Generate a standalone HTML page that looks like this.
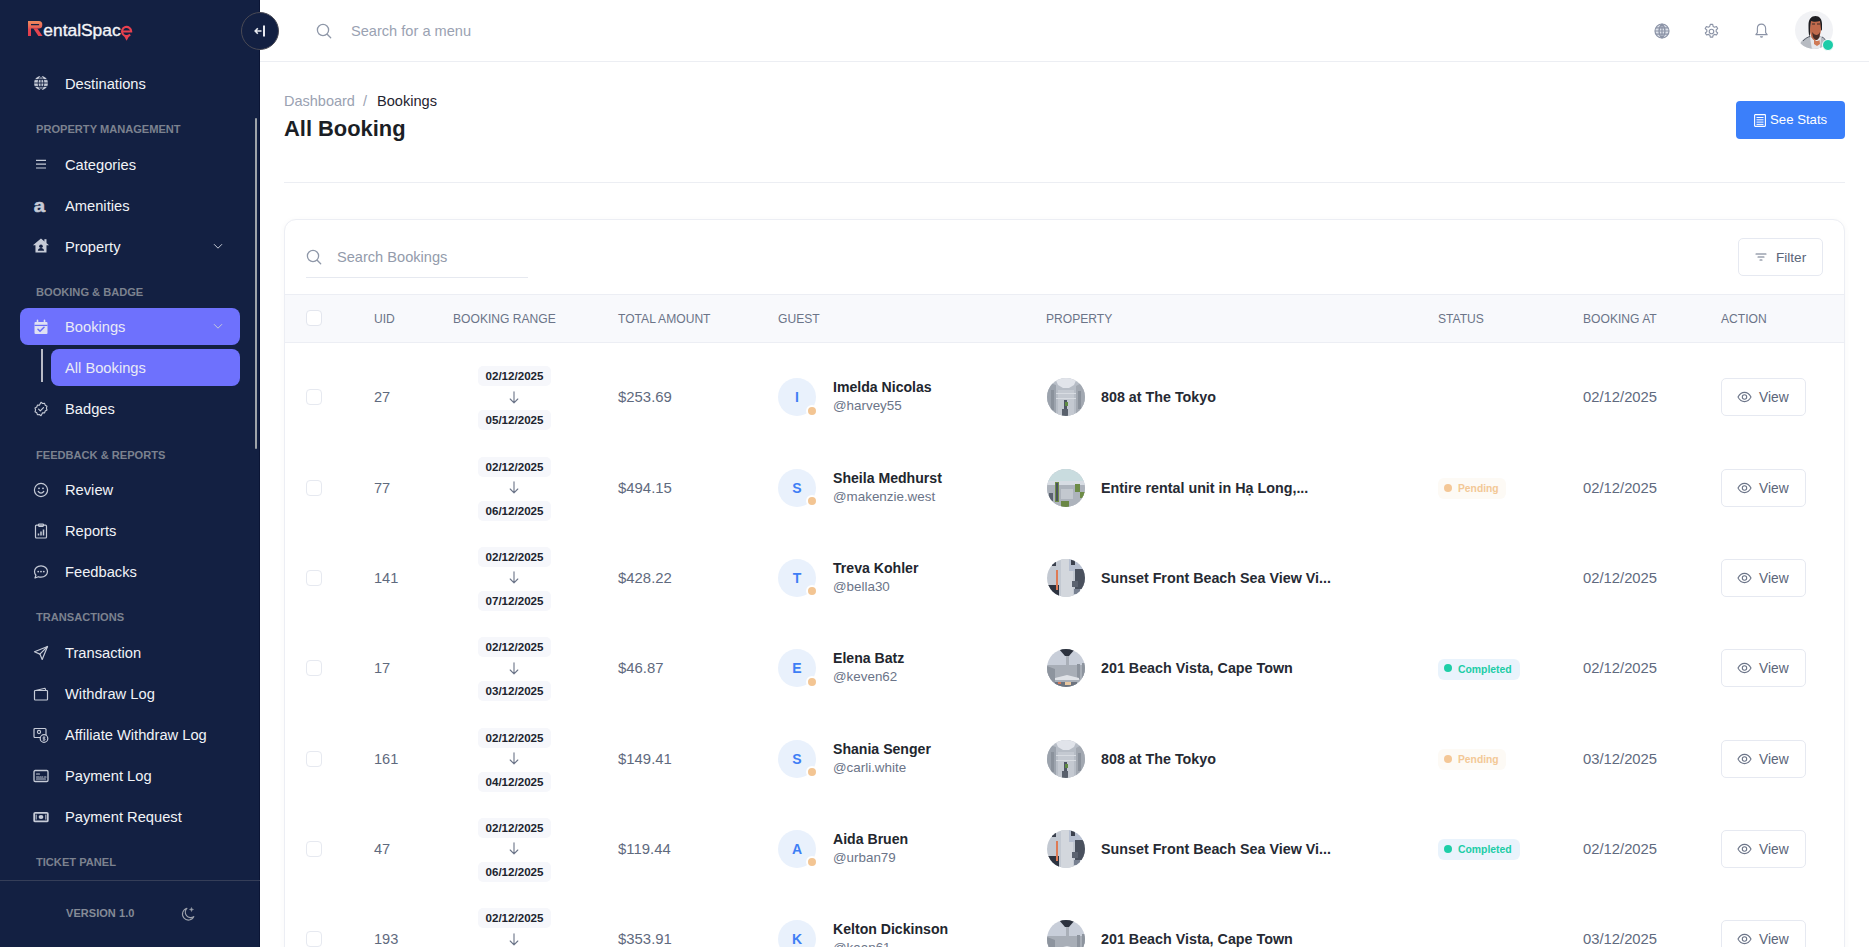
<!DOCTYPE html>
<html><head><meta charset="utf-8"><title>All Booking</title>
<style>
*{box-sizing:border-box;margin:0;padding:0}
html,body{width:1869px;height:947px;overflow:hidden;background:#ffffff;font-family:"Liberation Sans", sans-serif}
.abs{position:absolute}
.ic{position:absolute;overflow:visible}
#sb{position:absolute;left:0;top:0;width:260px;height:947px;background:#132042;border-right:1px solid #0b1535}
.it{position:absolute;left:65px;height:20px;line-height:20px;font-size:14.7px;color:#f1f3f7;white-space:nowrap}
.sec{position:absolute;left:36px;height:14px;line-height:14px;font-size:11.1px;font-weight:700;letter-spacing:0;color:#7c828f;white-space:nowrap}
.t{position:absolute;white-space:nowrap}
</style></head><body>
<div id="sb">

<svg class="abs" style="left:0;top:0" width="140" height="50" viewBox="0 0 140 50">
<defs><linearGradient id="rg" x1="0" y1="21" x2="0" y2="36" gradientUnits="userSpaceOnUse"><stop offset="0" stop-color="#ee8a5e"/><stop offset=".35" stop-color="#ea6a57"/><stop offset=".6" stop-color="#e5444f"/><stop offset="1" stop-color="#e23b4d"/></linearGradient></defs>
<path d="M28 21H38.8A3.5 3.5 0 0 1 42.3 24.5V25A3.5 3.5 0 0 1 38.8 28.5H31V36H28z M31 24V25.3H38.6A.65 .65 0 0 0 38.6 24z" fill="url(#rg)" fill-rule="evenodd"/>
<path d="M33.2 28.3H37.2L42.6 36H38.4z" fill="#e5444f"/>
<text x="43.3" y="36" font-family="Liberation Sans" font-size="17.4" fill="#f4f5f8" stroke="#f4f5f8" stroke-width=".35">entalSpac</text>
<path d="M122 31.5H131.2A4.6 4.6 0 1 0 130.1 34.46" fill="none" stroke="#e8404f" stroke-width="2.1"/>
<path d="M123.6 35.2L126.6 40.8L129.6 35.2z" fill="#e8404f"/>
</svg>
<div class="abs" style="left:20px;top:308px;width:220px;height:37px;border-radius:8px;background:#6e71fd"></div>
<div class="abs" style="left:51px;top:349px;width:189px;height:37px;border-radius:8px;background:#6e71fd"></div>
<div class="abs" style="left:41px;top:349px;width:2px;height:33px;background:#b9bcc6"></div>
<div class="it" style="top:74px;color:#f1f3f7">Destinations</div>
<svg class="ic" style="left:33px;top:76px" width="16" height="16" viewBox="0 0 16 16" fill="none" stroke="#c6cbd7" stroke-width="1.3" stroke-linecap="round" stroke-linejoin="round"><circle cx="8" cy="7" r="7" fill="#c6cbd7" stroke="none"/><path d="M1 7h14M8 0v14M1.8 3.6h12.4M1.8 10.4h12.4M8 0c-2.2 2-2.8 4.2-2.8 7s.6 5 2.8 7M8 0c2.2 2 2.8 4.2 2.8 7s-.6 5-2.8 7" stroke="#132042" stroke-width="0.9"/></svg>
<div class="it" style="top:155px;color:#f1f3f7">Categories</div>
<svg class="ic" style="left:33px;top:157px" width="16" height="16" viewBox="0 0 16 16" fill="none" stroke="#c6cbd7" stroke-width="1.3" stroke-linecap="round" stroke-linejoin="round"><path d="M3 3.4h10M3 7.2h10M3 11h10" stroke-width="1.2" stroke-linecap="butt"/></svg>
<div class="it" style="top:196px;color:#f1f3f7">Amenities</div>
<svg class="ic" style="left:33px;top:198px" width="16" height="16" viewBox="0 0 16 16" fill="none" stroke="#c6cbd7" stroke-width="1.3" stroke-linecap="round" stroke-linejoin="round"><text x="0.6" y="14" font-family="Liberation Sans" font-weight="700" font-size="19" fill="#c6cbd7" stroke="#c6cbd7" stroke-width=".5" transform="scale(1.08 1)">a</text></svg>
<div class="it" style="top:237px;color:#f1f3f7">Property</div>
<svg class="ic" style="left:33px;top:239px" width="16" height="16" viewBox="0 0 16 16" fill="none" stroke="#c6cbd7" stroke-width="1.3" stroke-linecap="round" stroke-linejoin="round"><g transform="translate(-0.5 -1.2) scale(1.06 1)"><path d="M8 .8L.4 7.4h2.4V14.6h10.4V7.4h2.4z" fill="#c6cbd7" stroke="none"/><rect x="11.2" y="1.4" width="2" height="3.8" fill="#c6cbd7" stroke="none"/><circle cx="8" cy="8.4" r="1.7" fill="#132042" stroke="none"/><path d="M5 13c.3-1.9 1.4-2.7 3-2.7s2.7.8 3 2.7z" fill="#132042" stroke="none"/></g></svg>
<div class="it" style="top:317px;color:#e9eaf6">Bookings</div>
<svg class="ic" style="left:33px;top:319px" width="16" height="16" viewBox="0 0 16 16" fill="none" stroke="#c6cbd7" stroke-width="1.3" stroke-linecap="round" stroke-linejoin="round"><rect x="1.5" y="3" width="13" height="12" rx="1" fill="#dfe1f3" stroke="none"/><path d="M4.5 1.2v3.4M11.5 1.2v3.4" stroke="#dfe1f3" stroke-width="1.6"/><rect x="1.5" y="5.8" width="13" height="1.2" fill="#6b6ef7" stroke="none"/><path d="M5 10.3l2 2 4-4" stroke="#6b6ef7" stroke-width="1.6"/></svg>
<div class="it" style="top:358px;color:#e9eaf6">All Bookings</div>
<div class="it" style="top:399px;color:#f1f3f7">Badges</div>
<svg class="ic" style="left:33px;top:401px" width="16" height="16" viewBox="0 0 16 16" fill="none" stroke="#c6cbd7" stroke-width="1.3" stroke-linecap="round" stroke-linejoin="round"><path d="M8 1.2l1.6 1.3 2-.2.6 1.9 1.8 1-.6 1.9.6 1.9-1.8 1-.6 1.9-2-.2L8 14.8l-1.6-1.3-2 .2-.6-1.9-1.8-1 .6-1.9-.6-1.9 1.8-1 .6-1.9 2 .2z" stroke-width="1.1"/><path d="M5.6 8.1l1.7 1.7 3.2-3.2" stroke-width="1.2"/></svg>
<div class="it" style="top:480px;color:#f1f3f7">Review</div>
<svg class="ic" style="left:33px;top:482px" width="16" height="16" viewBox="0 0 16 16" fill="none" stroke="#c6cbd7" stroke-width="1.3" stroke-linecap="round" stroke-linejoin="round"><circle cx="8" cy="8" r="6.6" stroke-width="1.2"/><path d="M5.2 9.4c.7 1.1 1.6 1.7 2.8 1.7s2.1-.6 2.8-1.7" stroke-width="1.2"/><circle cx="6" cy="6.3" r=".9" fill="#c6cbd7" stroke="none"/><circle cx="10" cy="6.3" r=".9" fill="#c6cbd7" stroke="none"/></svg>
<div class="it" style="top:521px;color:#f1f3f7">Reports</div>
<svg class="ic" style="left:33px;top:523px" width="16" height="16" viewBox="0 0 16 16" fill="none" stroke="#c6cbd7" stroke-width="1.3" stroke-linecap="round" stroke-linejoin="round"><rect x="2.5" y="2.2" width="11" height="12.8" rx="1" stroke-width="1.2"/><rect x="5.5" y="1" width="5" height="2.4" rx=".6" stroke-width="1.1"/><path d="M5.5 12.5v-2M8 12.5v-4M10.5 12.5v-6" stroke-width="1.5" stroke-linecap="butt"/></svg>
<div class="it" style="top:562px;color:#f1f3f7">Feedbacks</div>
<svg class="ic" style="left:33px;top:564px" width="16" height="16" viewBox="0 0 16 16" fill="none" stroke="#c6cbd7" stroke-width="1.3" stroke-linecap="round" stroke-linejoin="round"><path d="M8 1.8c3.7 0 6.5 2.5 6.5 5.7s-2.8 5.7-6.5 5.7c-.9 0-1.8-.2-2.6-.5L2 14l.9-2.8C2 10.2 1.5 8.9 1.5 7.5 1.5 4.3 4.3 1.8 8 1.8z" stroke-width="1.2"/><circle cx="5.2" cy="7.6" r=".9" fill="#c6cbd7" stroke="none"/><circle cx="8" cy="7.6" r=".9" fill="#c6cbd7" stroke="none"/><circle cx="10.8" cy="7.6" r=".9" fill="#c6cbd7" stroke="none"/></svg>
<div class="it" style="top:643px;color:#f1f3f7">Transaction</div>
<svg class="ic" style="left:33px;top:645px" width="16" height="16" viewBox="0 0 16 16" fill="none" stroke="#c6cbd7" stroke-width="1.3" stroke-linecap="round" stroke-linejoin="round"><path d="M14.5 1.5L1.5 6.8l5.4 2.3 2.3 5.4z" stroke-width="1.2"/><path d="M14.5 1.5L6.9 9.1" stroke-width="1.2"/></svg>
<div class="it" style="top:684px;color:#f1f3f7">Withdraw Log</div>
<svg class="ic" style="left:33px;top:686px" width="16" height="16" viewBox="0 0 16 16" fill="none" stroke="#c6cbd7" stroke-width="1.3" stroke-linecap="round" stroke-linejoin="round"><rect x="1.5" y="4.5" width="13" height="9.5" rx=".8" stroke-width="1.2"/><path d="M2.5 4.5l9.5-2.3.8 2.3" stroke-width="1.1"/></svg>
<div class="it" style="top:725px;color:#f1f3f7">Affiliate Withdraw Log</div>
<svg class="ic" style="left:33px;top:727px" width="16" height="16" viewBox="0 0 16 16" fill="none" stroke="#c6cbd7" stroke-width="1.3" stroke-linecap="round" stroke-linejoin="round"><rect x="1" y="1.5" width="12" height="9" rx="1" stroke-width="1.2"/><circle cx="6" cy="5" r="1.6" stroke-width="1.1"/><circle cx="11" cy="11.5" r="3.8" fill="#131f42" stroke-width="1.2"/><path d="M11 9.5v4M12 10.3h-1.5a.7.7 0 000 1.4h1a.7.7 0 010 1.4H10" stroke-width=".8"/></svg>
<div class="it" style="top:766px;color:#f1f3f7">Payment Log</div>
<svg class="ic" style="left:33px;top:768px" width="16" height="16" viewBox="0 0 16 16" fill="none" stroke="#c6cbd7" stroke-width="1.3" stroke-linecap="round" stroke-linejoin="round"><rect x="1" y="2.5" width="14" height="11" rx="1.2" stroke-width="1.3"/><path d="M3.5 6h3M3.5 9h2.5M7 9h1M9 9h1M11.5 9h1.5M3.5 11h9" stroke-width="1.1"/></svg>
<div class="it" style="top:807px;color:#f1f3f7">Payment Request</div>
<svg class="ic" style="left:33px;top:809px" width="16" height="16" viewBox="0 0 16 16" fill="none" stroke="#c6cbd7" stroke-width="1.3" stroke-linecap="round" stroke-linejoin="round"><rect x="1.2" y="3.8" width="13.6" height="8.6" rx="1" stroke-width="1.8"/><ellipse cx="8" cy="8.1" rx="2.4" ry="2" fill="#c6cbd7" stroke="none"/><path d="M3.2 6v4.2M12.8 6v4.2" stroke-width="1"/></svg>
<div class="sec" style="top:122px">PROPERTY MANAGEMENT</div>
<div class="sec" style="top:285px">BOOKING &amp; BADGE</div>
<div class="sec" style="top:448px">FEEDBACK &amp; REPORTS</div>
<div class="sec" style="top:610px">TRANSACTIONS</div>
<div class="sec" style="top:855px">TICKET PANEL</div>
<svg class="ic" style="left:213px;top:243px" width="10" height="7" viewBox="0 0 10 7" fill="none" stroke="#c6cbd7" stroke-width="1"><path d="M1 1.2l4 4 4-4"/></svg>
<svg class="ic" style="left:213px;top:323px" width="10" height="7" viewBox="0 0 10 7" fill="none" stroke="#c6cbd7" stroke-width="1"><path d="M1 1.2l4 4 4-4"/></svg>
<div class="abs" style="left:255px;top:118px;width:2px;height:331px;background:#9ea3a9;border-radius:1px"></div>
<div class="abs" style="left:0;top:880px;width:260px;height:1px;background:#353e58"></div>
<div class="t" style="left:66px;top:906px;height:14px;line-height:14px;font-size:11px;font-weight:700;letter-spacing:.05px;color:#858b97">VERSION 1.0</div>
<svg class="ic" style="left:180px;top:906px" width="16" height="16" viewBox="0 0 16 16" fill="none" stroke="#9ba0ab" stroke-width="1.1"><path d="M7.2 2.2A6 6 0 1 0 14 10.4 5 5 0 0 1 7.2 2.2z"/><path d="M11.5 1.5l.5 1.5 1.5.5-1.5.5-.5 1.5-.5-1.5-1.5-.5 1.5-.5z" fill="#9ba0ab" stroke-width=".5"/></svg>
</div>
<div class="abs" style="left:241px;top:12px;width:38px;height:38px;border-radius:50%;background:#132042;border:1px solid #4a4a55"></div>
<svg class="ic" style="left:253px;top:24px" width="14" height="14" viewBox="0 0 14 14" fill="none" stroke="#e8eaf0" stroke-width="1.6"><path d="M8.5 7H2.2M4.8 4.3L2.2 7l2.6 2.7"/><path d="M11 1.5v11" stroke-width="2"/></svg>
<div class="abs" style="left:260px;top:61px;width:1609px;height:1px;background:#eceef3"></div>
<svg class="ic" style="left:316px;top:23px" width="16" height="16" viewBox="0 0 16 16" fill="none" stroke="#8e97a8" stroke-width="1.3" stroke-linecap="round"><circle cx="7" cy="7" r="5.6"/><path d="M11.2 11.2l3.5 3.5"/></svg>
<div class="t" style="left:351px;top:21px;height:20px;line-height:20px;font-size:14.6px;color:#9aa2b2">Search for a menu</div>
<svg class="ic" style="left:1654px;top:23px" width="16" height="16" viewBox="0 0 16 16" fill="none" stroke="#8b93a6" stroke-width="1.2"><circle cx="8" cy="8" r="7" fill="#dde1ea"/><path d="M1 8h14M8 1v14M2 4.8h12M2 11.2h12M8 1c-2.2 2-3 4.3-3 7s.8 5 3 7M8 1c2.2 2 3 4.3 3 7s-.8 5-3 7"/></svg>
<svg class="ic" style="left:1703px;top:23px" width="17" height="17" viewBox="0 0 24 24" fill="none" stroke="#8b93a6" stroke-width="1.6" stroke-linejoin="round"><path d="M10.3 2h3.4l.6 2.8 2 1.1 2.7-.9 1.7 2.9-2.1 1.9v2.4l2.1 1.9-1.7 2.9-2.7-.9-2 1.1-.6 2.8h-3.4l-.6-2.8-2-1.1-2.7.9-1.7-2.9 2.1-1.9v-2.4L3.1 7.9l1.7-2.9 2.7.9 2-1.1z"/><circle cx="12" cy="12" r="3.2"/></svg>
<svg class="ic" style="left:1754px;top:23px" width="15" height="15" viewBox="0 0 16 16" fill="none" stroke="#8b93a6" stroke-width="1.2" stroke-linejoin="round"><path d="M8 1.2c-2.6 0-4.4 2-4.4 4.6v4.4L2 12.4h12l-1.6-2.2V5.8C12.4 3.2 10.6 1.2 8 1.2z"/><path d="M6.8 14.2c.3.5.7.7 1.2.7s.9-.2 1.2-.7" stroke-width="1.4"/></svg>
<div class="abs" style="left:1795px;top:10.5px;width:38px;height:38px;border-radius:50%;background:#f1f2f5;overflow:hidden">
<svg width="38" height="38" viewBox="0 0 38 38"><path d="M3 40L6 31c2-3 5-5 9-6l5 2 5-2c4 1 7 4 8 8l1 7z" fill="#b7bbc2"/><path d="M8 30c3-3 5-4 7-4.5M27 26c2 1 4 3 5 6" stroke="#5b606b" stroke-width="1" fill="none"/><path d="M15 26l5 2 6-2-1 13H17z" fill="#e6e8ec"/><path d="M13.5 14c0-6 3-9 7-9s6.5 3 6.5 8v7l-2-3-1-6c-3 1-6 1-8 0l-.5 9-1 6c-1-3-1-8-1-12z" fill="#1e1e22"/><path d="M16 10c2 1 6 1 9 0l1 8c0 5-2 9-4 10.5-1.5 1-3 1-4 0-2-2-3-6-3-10z" fill="#c06a4c"/><path d="M17 13h3M22 13h3" stroke="#3a2a28" stroke-width="1.2"/><path d="M17 21c1.5 2 3 3 4.5 3s2.5-1 3.5-3l-.5 5c-1 2-2 3-3 3s-2.5-1-3.5-3z" fill="#4a2e28"/><path d="M19 28c1.5 2 3.5 3 5.5 1l.5 4-3 2-3-2z" fill="#cf7a56"/></svg></div>
<div class="abs" style="left:1821.5px;top:38.5px;width:12px;height:12px;border-radius:50%;background:#1ccca8;border:1.3px solid #fff"></div>
<div class="t" style="left:284px;top:91px;height:20px;line-height:20px;font-size:14.5px;color:#9aa2b2">Dashboard</div>
<div class="t" style="left:363px;top:91px;height:20px;line-height:20px;font-size:14.5px;color:#9aa2b2">/</div>
<div class="t" style="left:377px;top:91px;height:20px;line-height:20px;font-size:14.6px;color:#1f2430">Bookings</div>
<div class="t" style="left:284px;top:114px;height:30px;line-height:30px;font-size:21.9px;font-weight:700;color:#1b1e25">All Booking</div>
<div class="abs" style="left:1736px;top:101px;width:109px;height:38px;border-radius:4px;background:#3b7ffa"></div>
<svg class="ic" style="left:1754px;top:114px" width="12" height="13" viewBox="0 0 12 13" fill="none" stroke="#fff" stroke-width="1.1"><rect x=".6" y=".6" width="10.8" height="11.8" rx=".6"/><path d="M2.5 3.5h7M2.5 5.8h7M2.5 8.1h7M2.5 10.4h7" stroke-width="1"/></svg>
<div class="t" style="left:1770px;top:110px;height:20px;line-height:20px;font-size:13.2px;color:#ffffff">See Stats</div>
<div class="abs" style="left:284px;top:182px;width:1561px;height:1px;background:#eceef3"></div>
<div class="abs" style="left:284px;top:219px;width:1561px;height:760px;border:1px solid #eceef4;border-radius:12px;background:#fff;box-shadow:0 1px 6px rgba(30,40,70,.035)"></div>
<svg class="ic" style="left:306px;top:249px" width="16" height="16" viewBox="0 0 16 16" fill="none" stroke="#8e97a8" stroke-width="1.3" stroke-linecap="round"><circle cx="7" cy="7" r="5.6"/><path d="M11.2 11.2l3.5 3.5"/></svg>
<div class="t" style="left:337px;top:247px;height:20px;line-height:20px;font-size:14.6px;color:#939bab">Search Bookings</div>
<div class="abs" style="left:306px;top:277px;width:222px;height:1px;background:#e6e9f0"></div>
<div class="abs" style="left:1738px;top:238px;width:85px;height:38px;border:1px solid #e6e9f1;border-radius:5px;background:#fff"></div>
<svg class="ic" style="left:1755px;top:253px" width="12" height="8" viewBox="0 0 12 8" fill="none" stroke="#6b7488" stroke-width="1.1" stroke-linecap="round"><path d="M1 1h10M3 4h6M5 7h2"/></svg>
<div class="t" style="left:1776px;top:247.5px;height:20px;line-height:20px;font-size:13.6px;color:#5b6579">Filter</div>
<div class="abs" style="left:285px;top:294px;width:1559px;height:49px;background:#f8f9fc;border-top:1px solid #eceef4;border-bottom:1px solid #eceef4"></div>
<div class="abs" style="left:306px;top:310px;width:16px;height:16px;border:1px solid #e3e6ee;border-radius:4px;background:#fff"></div>
<div class="t" style="left:374px;top:310px;height:18px;line-height:18px;font-size:12.1px;color:#6b7488">UID</div>
<div class="t" style="left:453px;top:310px;height:18px;line-height:18px;font-size:12.1px;color:#6b7488">BOOKING RANGE</div>
<div class="t" style="left:618px;top:310px;height:18px;line-height:18px;font-size:12.1px;color:#6b7488">TOTAL AMOUNT</div>
<div class="t" style="left:778px;top:310px;height:18px;line-height:18px;font-size:12.1px;color:#6b7488">GUEST</div>
<div class="t" style="left:1046px;top:310px;height:18px;line-height:18px;font-size:12.1px;color:#6b7488">PROPERTY</div>
<div class="t" style="left:1438px;top:310px;height:18px;line-height:18px;font-size:12.1px;color:#6b7488">STATUS</div>
<div class="t" style="left:1583px;top:310px;height:18px;line-height:18px;font-size:12.1px;color:#6b7488">BOOKING AT</div>
<div class="t" style="left:1721px;top:310px;height:18px;line-height:18px;font-size:12.1px;color:#6b7488">ACTION</div>
<div class="abs" style="left:306px;top:389.2px;width:16px;height:16px;border:1px solid #e6e9f0;border-radius:4px;background:#fff"></div>
<div class="t" style="left:374px;top:387.2px;height:20px;line-height:20px;font-size:14.6px;color:#5f6a7e">27</div>
<div class="abs" style="left:478px;top:366.2px;width:73px;height:20px;border-radius:5px;background:#f6f7fb;font-size:11.6px;font-weight:700;color:#20242e;text-align:center;line-height:20px">02/12/2025</div>
<svg class="ic" style="left:509px;top:390.7px" width="10" height="13" viewBox="0 0 10 13" fill="none" stroke="#6b7488" stroke-width="1.1" stroke-linecap="round" stroke-linejoin="round"><path d="M5 .8v11M1.2 8l3.8 3.8L8.8 8"/></svg>
<div class="abs" style="left:478px;top:410.2px;width:73px;height:20px;border-radius:5px;background:#f6f7fb;font-size:11.6px;font-weight:700;color:#20242e;text-align:center;line-height:20px">05/12/2025</div>
<div class="t" style="left:618px;top:387.2px;height:20px;line-height:20px;font-size:14.9px;color:#5f6a7e">$253.69</div>
<div class="abs" style="left:778px;top:378.2px;width:38px;height:38px;border-radius:50%;background:#e9f1fc;color:#3e7ef5;font-size:14px;font-weight:700;text-align:center;line-height:38px">I</div>
<div class="abs" style="left:805.5px;top:404.7px;width:12px;height:12px;border-radius:50%;background:#f3c593;border:2px solid #fff"></div>
<div class="t" style="left:833px;top:377.2px;height:20px;line-height:20px;font-size:14.1px;font-weight:700;color:#22262e">Imelda Nicolas</div>
<div class="t" style="left:833px;top:397.2px;height:18px;line-height:18px;font-size:13.4px;color:#6b7488">@harvey55</div>
<div class="abs" style="left:1047px;top:378.2px;width:38px;height:38px;border-radius:50%;overflow:hidden"><svg width="38" height="38" viewBox="0 0 38 38"><rect width="38" height="38" fill="#b7bdc6"/><path d="M8 0h22l-3 7-5 3h-6l-5-3z" fill="#e1e4ea"/><path d="M0 4l9 3v31H0z" fill="#9ca3ad"/><path d="M38 3l-9 5v30h9z" fill="#a2a8b1"/><path d="M11 12h16v26H11z" fill="#c4c9d1"/><path d="M4 12h3v20H4zM31 13h3v18h-3z" fill="#8a919b"/><path d="M17 22h3v10h-3z" fill="#4e5563"/><path d="M18 24h3v4h-3z" fill="#5f8a43"/><path d="M15 31h6v7h-6z" fill="#59606c"/><path d="M9 15h20v1H9zM9 20h20v1H9z" fill="#d8dce2"/></svg></div>
<div class="t" style="left:1101px;top:387.2px;height:20px;line-height:20px;font-size:14.3px;font-weight:700;color:#262a33">808 at The Tokyo</div>
<div class="t" style="left:1583px;top:387.2px;height:20px;line-height:20px;font-size:14.8px;color:#5f6a7e">02/12/2025</div>
<div class="abs" style="left:1721px;top:378.2px;width:85px;height:38px;border:1px solid #e6e9f1;border-radius:5px;background:#fff"></div>
<svg class="ic" style="left:1737px;top:391.2px" width="15" height="12" viewBox="0 0 15 12" fill="none" stroke="#6b7488" stroke-width="1.1"><path d="M1 6c1.6-3 3.8-4.6 6.5-4.6S12.4 3 14 6c-1.6 3-3.8 4.6-6.5 4.6S2.6 9 1 6z"/><circle cx="7.5" cy="6" r="2.2"/></svg>
<div class="t" style="left:1759px;top:388.2px;height:20px;line-height:20px;font-size:13.8px;color:#5b6579">View</div>
<div class="abs" style="left:306px;top:479.55px;width:16px;height:16px;border:1px solid #e6e9f0;border-radius:4px;background:#fff"></div>
<div class="t" style="left:374px;top:477.55px;height:20px;line-height:20px;font-size:14.6px;color:#5f6a7e">77</div>
<div class="abs" style="left:478px;top:456.55px;width:73px;height:20px;border-radius:5px;background:#f6f7fb;font-size:11.6px;font-weight:700;color:#20242e;text-align:center;line-height:20px">02/12/2025</div>
<svg class="ic" style="left:509px;top:481.05px" width="10" height="13" viewBox="0 0 10 13" fill="none" stroke="#6b7488" stroke-width="1.1" stroke-linecap="round" stroke-linejoin="round"><path d="M5 .8v11M1.2 8l3.8 3.8L8.8 8"/></svg>
<div class="abs" style="left:478px;top:500.55px;width:73px;height:20px;border-radius:5px;background:#f6f7fb;font-size:11.6px;font-weight:700;color:#20242e;text-align:center;line-height:20px">06/12/2025</div>
<div class="t" style="left:618px;top:477.55px;height:20px;line-height:20px;font-size:14.9px;color:#5f6a7e">$494.15</div>
<div class="abs" style="left:778px;top:468.55px;width:38px;height:38px;border-radius:50%;background:#e9f1fc;color:#3e7ef5;font-size:14px;font-weight:700;text-align:center;line-height:38px">S</div>
<div class="abs" style="left:805.5px;top:495.05px;width:12px;height:12px;border-radius:50%;background:#f3c593;border:2px solid #fff"></div>
<div class="t" style="left:833px;top:467.55px;height:20px;line-height:20px;font-size:14.1px;font-weight:700;color:#22262e">Sheila Medhurst</div>
<div class="t" style="left:833px;top:487.55px;height:18px;line-height:18px;font-size:13.4px;color:#6b7488">@makenzie.west</div>
<div class="abs" style="left:1047px;top:468.55px;width:38px;height:38px;border-radius:50%;overflow:hidden"><svg width="38" height="38" viewBox="0 0 38 38"><rect width="38" height="38" fill="#b9bfc8"/><path d="M0 0h38v12H0z" fill="#c9dcdf"/><path d="M0 12h38v4H0z" fill="#d7dce3"/><path d="M0 16h38v22H0z" fill="#adb3bc"/><path d="M8 13h4v20H8z" fill="#6f8c47"/><path d="M9 14h2v18H9z" fill="#4b5360"/><path d="M28 15h5v8h-5zM33 23h5v6h-5z" fill="#6d8b46"/><path d="M14 32h8v6h-8z" fill="#6a8745"/><path d="M2 24h4v8H2z" fill="#5b6370"/><path d="M14 20h12v10H14z" fill="#c3c8cf"/></svg></div>
<div class="t" style="left:1101px;top:477.55px;height:20px;line-height:20px;font-size:14.3px;font-weight:700;color:#262a33">Entire rental unit in Hạ Long,...</div>
<div class="abs" style="left:1438px;top:478.05px;width:68px;height:21px;border-radius:6px;background:#fdfaf5"></div>
<div class="abs" style="left:1444px;top:483.55px;width:8px;height:8px;border-radius:50%;background:#f4c796"></div>
<div class="t" style="left:1458px;top:481.05px;height:16px;line-height:16px;font-size:10.3px;font-weight:700;color:#f3c896">Pending</div>
<div class="t" style="left:1583px;top:477.55px;height:20px;line-height:20px;font-size:14.8px;color:#5f6a7e">02/12/2025</div>
<div class="abs" style="left:1721px;top:468.55px;width:85px;height:38px;border:1px solid #e6e9f1;border-radius:5px;background:#fff"></div>
<svg class="ic" style="left:1737px;top:481.55px" width="15" height="12" viewBox="0 0 15 12" fill="none" stroke="#6b7488" stroke-width="1.1"><path d="M1 6c1.6-3 3.8-4.6 6.5-4.6S12.4 3 14 6c-1.6 3-3.8 4.6-6.5 4.6S2.6 9 1 6z"/><circle cx="7.5" cy="6" r="2.2"/></svg>
<div class="t" style="left:1759px;top:478.55px;height:20px;line-height:20px;font-size:13.8px;color:#5b6579">View</div>
<div class="abs" style="left:306px;top:569.9px;width:16px;height:16px;border:1px solid #e6e9f0;border-radius:4px;background:#fff"></div>
<div class="t" style="left:374px;top:567.9px;height:20px;line-height:20px;font-size:14.6px;color:#5f6a7e">141</div>
<div class="abs" style="left:478px;top:546.9px;width:73px;height:20px;border-radius:5px;background:#f6f7fb;font-size:11.6px;font-weight:700;color:#20242e;text-align:center;line-height:20px">02/12/2025</div>
<svg class="ic" style="left:509px;top:571.4px" width="10" height="13" viewBox="0 0 10 13" fill="none" stroke="#6b7488" stroke-width="1.1" stroke-linecap="round" stroke-linejoin="round"><path d="M5 .8v11M1.2 8l3.8 3.8L8.8 8"/></svg>
<div class="abs" style="left:478px;top:590.9px;width:73px;height:20px;border-radius:5px;background:#f6f7fb;font-size:11.6px;font-weight:700;color:#20242e;text-align:center;line-height:20px">07/12/2025</div>
<div class="t" style="left:618px;top:567.9px;height:20px;line-height:20px;font-size:14.9px;color:#5f6a7e">$428.22</div>
<div class="abs" style="left:778px;top:558.9px;width:38px;height:38px;border-radius:50%;background:#e9f1fc;color:#3e7ef5;font-size:14px;font-weight:700;text-align:center;line-height:38px">T</div>
<div class="abs" style="left:805.5px;top:585.4px;width:12px;height:12px;border-radius:50%;background:#f3c593;border:2px solid #fff"></div>
<div class="t" style="left:833px;top:557.9px;height:20px;line-height:20px;font-size:14.1px;font-weight:700;color:#22262e">Treva Kohler</div>
<div class="t" style="left:833px;top:577.9px;height:18px;line-height:18px;font-size:13.4px;color:#6b7488">@bella30</div>
<div class="abs" style="left:1047px;top:558.9px;width:38px;height:38px;border-radius:50%;overflow:hidden"><svg width="38" height="38" viewBox="0 0 38 38"><rect width="38" height="38" fill="#c3c9d2"/><path d="M14 0h12v38H14z" fill="#d3d7dd"/><path d="M22 0h16v12H22z" fill="#b6bfd0"/><path d="M28 10h10v20H28z" fill="#4a515e"/><path d="M25 22h6v6h-6z" fill="#5c6370"/><path d="M0 26h12v12H0z" fill="#2d3340"/><path d="M9 11h2v20H9z" fill="#de7a55"/><path d="M5 3h4v4H5zM24 0h4v6h-4z" fill="#3b414e"/><path d="M27 30h6v5h-6z" fill="#778090"/></svg></div>
<div class="t" style="left:1101px;top:567.9px;height:20px;line-height:20px;font-size:14.3px;font-weight:700;color:#262a33">Sunset Front Beach Sea View Vi...</div>
<div class="t" style="left:1583px;top:567.9px;height:20px;line-height:20px;font-size:14.8px;color:#5f6a7e">02/12/2025</div>
<div class="abs" style="left:1721px;top:558.9px;width:85px;height:38px;border:1px solid #e6e9f1;border-radius:5px;background:#fff"></div>
<svg class="ic" style="left:1737px;top:571.9px" width="15" height="12" viewBox="0 0 15 12" fill="none" stroke="#6b7488" stroke-width="1.1"><path d="M1 6c1.6-3 3.8-4.6 6.5-4.6S12.4 3 14 6c-1.6 3-3.8 4.6-6.5 4.6S2.6 9 1 6z"/><circle cx="7.5" cy="6" r="2.2"/></svg>
<div class="t" style="left:1759px;top:568.9px;height:20px;line-height:20px;font-size:13.8px;color:#5b6579">View</div>
<div class="abs" style="left:306px;top:660.25px;width:16px;height:16px;border:1px solid #e6e9f0;border-radius:4px;background:#fff"></div>
<div class="t" style="left:374px;top:658.25px;height:20px;line-height:20px;font-size:14.6px;color:#5f6a7e">17</div>
<div class="abs" style="left:478px;top:637.25px;width:73px;height:20px;border-radius:5px;background:#f6f7fb;font-size:11.6px;font-weight:700;color:#20242e;text-align:center;line-height:20px">02/12/2025</div>
<svg class="ic" style="left:509px;top:661.75px" width="10" height="13" viewBox="0 0 10 13" fill="none" stroke="#6b7488" stroke-width="1.1" stroke-linecap="round" stroke-linejoin="round"><path d="M5 .8v11M1.2 8l3.8 3.8L8.8 8"/></svg>
<div class="abs" style="left:478px;top:681.25px;width:73px;height:20px;border-radius:5px;background:#f6f7fb;font-size:11.6px;font-weight:700;color:#20242e;text-align:center;line-height:20px">03/12/2025</div>
<div class="t" style="left:618px;top:658.25px;height:20px;line-height:20px;font-size:14.9px;color:#5f6a7e">$46.87</div>
<div class="abs" style="left:778px;top:649.25px;width:38px;height:38px;border-radius:50%;background:#e9f1fc;color:#3e7ef5;font-size:14px;font-weight:700;text-align:center;line-height:38px">E</div>
<div class="abs" style="left:805.5px;top:675.75px;width:12px;height:12px;border-radius:50%;background:#f3c593;border:2px solid #fff"></div>
<div class="t" style="left:833px;top:648.25px;height:20px;line-height:20px;font-size:14.1px;font-weight:700;color:#22262e">Elena Batz</div>
<div class="t" style="left:833px;top:668.25px;height:18px;line-height:18px;font-size:13.4px;color:#6b7488">@keven62</div>
<div class="abs" style="left:1047px;top:649.25px;width:38px;height:38px;border-radius:50%;overflow:hidden"><svg width="38" height="38" viewBox="0 0 38 38"><rect width="38" height="38" fill="#c8ced9"/><path d="M12 0h16l-6 7h-4z" fill="#2c323e"/><path d="M19 7h3v18h-3z" fill="#a9afb8"/><path d="M0 16h38v22H0z" fill="#a8aeb7"/><path d="M0 17l8 3v18H0zM30 15h3v15h-3zM35 14h3v16h-3z" fill="#8d949e"/><path d="M8 29l12-3 12 3v2H8z" fill="#dfe2e7"/><path d="M8 33h22v5H8z" fill="#6d747f"/><path d="M18 33h6v3h-6z" fill="#e8c7a0"/><path d="M11 33h3v2h-3z" fill="#d57a5a"/></svg></div>
<div class="t" style="left:1101px;top:658.25px;height:20px;line-height:20px;font-size:14.3px;font-weight:700;color:#262a33">201 Beach Vista, Cape Town</div>
<div class="abs" style="left:1438px;top:658.75px;width:82px;height:21px;border-radius:6px;background:#e9f3fc"></div>
<div class="abs" style="left:1444px;top:664.25px;width:8px;height:8px;border-radius:50%;background:#1dcea7"></div>
<div class="t" style="left:1458px;top:661.75px;height:16px;line-height:16px;font-size:10.4px;font-weight:700;color:#1ccda6">Completed</div>
<div class="t" style="left:1583px;top:658.25px;height:20px;line-height:20px;font-size:14.8px;color:#5f6a7e">02/12/2025</div>
<div class="abs" style="left:1721px;top:649.25px;width:85px;height:38px;border:1px solid #e6e9f1;border-radius:5px;background:#fff"></div>
<svg class="ic" style="left:1737px;top:662.25px" width="15" height="12" viewBox="0 0 15 12" fill="none" stroke="#6b7488" stroke-width="1.1"><path d="M1 6c1.6-3 3.8-4.6 6.5-4.6S12.4 3 14 6c-1.6 3-3.8 4.6-6.5 4.6S2.6 9 1 6z"/><circle cx="7.5" cy="6" r="2.2"/></svg>
<div class="t" style="left:1759px;top:659.25px;height:20px;line-height:20px;font-size:13.8px;color:#5b6579">View</div>
<div class="abs" style="left:306px;top:750.6px;width:16px;height:16px;border:1px solid #e6e9f0;border-radius:4px;background:#fff"></div>
<div class="t" style="left:374px;top:748.6px;height:20px;line-height:20px;font-size:14.6px;color:#5f6a7e">161</div>
<div class="abs" style="left:478px;top:727.6px;width:73px;height:20px;border-radius:5px;background:#f6f7fb;font-size:11.6px;font-weight:700;color:#20242e;text-align:center;line-height:20px">02/12/2025</div>
<svg class="ic" style="left:509px;top:752.1px" width="10" height="13" viewBox="0 0 10 13" fill="none" stroke="#6b7488" stroke-width="1.1" stroke-linecap="round" stroke-linejoin="round"><path d="M5 .8v11M1.2 8l3.8 3.8L8.8 8"/></svg>
<div class="abs" style="left:478px;top:771.6px;width:73px;height:20px;border-radius:5px;background:#f6f7fb;font-size:11.6px;font-weight:700;color:#20242e;text-align:center;line-height:20px">04/12/2025</div>
<div class="t" style="left:618px;top:748.6px;height:20px;line-height:20px;font-size:14.9px;color:#5f6a7e">$149.41</div>
<div class="abs" style="left:778px;top:739.6px;width:38px;height:38px;border-radius:50%;background:#e9f1fc;color:#3e7ef5;font-size:14px;font-weight:700;text-align:center;line-height:38px">S</div>
<div class="abs" style="left:805.5px;top:766.1px;width:12px;height:12px;border-radius:50%;background:#f3c593;border:2px solid #fff"></div>
<div class="t" style="left:833px;top:738.6px;height:20px;line-height:20px;font-size:14.1px;font-weight:700;color:#22262e">Shania Senger</div>
<div class="t" style="left:833px;top:758.6px;height:18px;line-height:18px;font-size:13.4px;color:#6b7488">@carli.white</div>
<div class="abs" style="left:1047px;top:739.6px;width:38px;height:38px;border-radius:50%;overflow:hidden"><svg width="38" height="38" viewBox="0 0 38 38"><rect width="38" height="38" fill="#b7bdc6"/><path d="M8 0h22l-3 7-5 3h-6l-5-3z" fill="#e1e4ea"/><path d="M0 4l9 3v31H0z" fill="#9ca3ad"/><path d="M38 3l-9 5v30h9z" fill="#a2a8b1"/><path d="M11 12h16v26H11z" fill="#c4c9d1"/><path d="M4 12h3v20H4zM31 13h3v18h-3z" fill="#8a919b"/><path d="M17 22h3v10h-3z" fill="#4e5563"/><path d="M18 24h3v4h-3z" fill="#5f8a43"/><path d="M15 31h6v7h-6z" fill="#59606c"/><path d="M9 15h20v1H9zM9 20h20v1H9z" fill="#d8dce2"/></svg></div>
<div class="t" style="left:1101px;top:748.6px;height:20px;line-height:20px;font-size:14.3px;font-weight:700;color:#262a33">808 at The Tokyo</div>
<div class="abs" style="left:1438px;top:749.1px;width:68px;height:21px;border-radius:6px;background:#fdfaf5"></div>
<div class="abs" style="left:1444px;top:754.6px;width:8px;height:8px;border-radius:50%;background:#f4c796"></div>
<div class="t" style="left:1458px;top:752.1px;height:16px;line-height:16px;font-size:10.3px;font-weight:700;color:#f3c896">Pending</div>
<div class="t" style="left:1583px;top:748.6px;height:20px;line-height:20px;font-size:14.8px;color:#5f6a7e">03/12/2025</div>
<div class="abs" style="left:1721px;top:739.6px;width:85px;height:38px;border:1px solid #e6e9f1;border-radius:5px;background:#fff"></div>
<svg class="ic" style="left:1737px;top:752.6px" width="15" height="12" viewBox="0 0 15 12" fill="none" stroke="#6b7488" stroke-width="1.1"><path d="M1 6c1.6-3 3.8-4.6 6.5-4.6S12.4 3 14 6c-1.6 3-3.8 4.6-6.5 4.6S2.6 9 1 6z"/><circle cx="7.5" cy="6" r="2.2"/></svg>
<div class="t" style="left:1759px;top:749.6px;height:20px;line-height:20px;font-size:13.8px;color:#5b6579">View</div>
<div class="abs" style="left:306px;top:840.95px;width:16px;height:16px;border:1px solid #e6e9f0;border-radius:4px;background:#fff"></div>
<div class="t" style="left:374px;top:838.95px;height:20px;line-height:20px;font-size:14.6px;color:#5f6a7e">47</div>
<div class="abs" style="left:478px;top:817.95px;width:73px;height:20px;border-radius:5px;background:#f6f7fb;font-size:11.6px;font-weight:700;color:#20242e;text-align:center;line-height:20px">02/12/2025</div>
<svg class="ic" style="left:509px;top:842.45px" width="10" height="13" viewBox="0 0 10 13" fill="none" stroke="#6b7488" stroke-width="1.1" stroke-linecap="round" stroke-linejoin="round"><path d="M5 .8v11M1.2 8l3.8 3.8L8.8 8"/></svg>
<div class="abs" style="left:478px;top:861.95px;width:73px;height:20px;border-radius:5px;background:#f6f7fb;font-size:11.6px;font-weight:700;color:#20242e;text-align:center;line-height:20px">06/12/2025</div>
<div class="t" style="left:618px;top:838.95px;height:20px;line-height:20px;font-size:14.9px;color:#5f6a7e">$119.44</div>
<div class="abs" style="left:778px;top:829.95px;width:38px;height:38px;border-radius:50%;background:#e9f1fc;color:#3e7ef5;font-size:14px;font-weight:700;text-align:center;line-height:38px">A</div>
<div class="abs" style="left:805.5px;top:856.45px;width:12px;height:12px;border-radius:50%;background:#f3c593;border:2px solid #fff"></div>
<div class="t" style="left:833px;top:828.95px;height:20px;line-height:20px;font-size:14.1px;font-weight:700;color:#22262e">Aida Bruen</div>
<div class="t" style="left:833px;top:848.95px;height:18px;line-height:18px;font-size:13.4px;color:#6b7488">@urban79</div>
<div class="abs" style="left:1047px;top:829.95px;width:38px;height:38px;border-radius:50%;overflow:hidden"><svg width="38" height="38" viewBox="0 0 38 38"><rect width="38" height="38" fill="#c3c9d2"/><path d="M14 0h12v38H14z" fill="#d3d7dd"/><path d="M22 0h16v12H22z" fill="#b6bfd0"/><path d="M28 10h10v20H28z" fill="#4a515e"/><path d="M25 22h6v6h-6z" fill="#5c6370"/><path d="M0 26h12v12H0z" fill="#2d3340"/><path d="M9 11h2v20H9z" fill="#de7a55"/><path d="M5 3h4v4H5zM24 0h4v6h-4z" fill="#3b414e"/><path d="M27 30h6v5h-6z" fill="#778090"/></svg></div>
<div class="t" style="left:1101px;top:838.95px;height:20px;line-height:20px;font-size:14.3px;font-weight:700;color:#262a33">Sunset Front Beach Sea View Vi...</div>
<div class="abs" style="left:1438px;top:839.45px;width:82px;height:21px;border-radius:6px;background:#e9f3fc"></div>
<div class="abs" style="left:1444px;top:844.95px;width:8px;height:8px;border-radius:50%;background:#1dcea7"></div>
<div class="t" style="left:1458px;top:842.45px;height:16px;line-height:16px;font-size:10.4px;font-weight:700;color:#1ccda6">Completed</div>
<div class="t" style="left:1583px;top:838.95px;height:20px;line-height:20px;font-size:14.8px;color:#5f6a7e">02/12/2025</div>
<div class="abs" style="left:1721px;top:829.95px;width:85px;height:38px;border:1px solid #e6e9f1;border-radius:5px;background:#fff"></div>
<svg class="ic" style="left:1737px;top:842.95px" width="15" height="12" viewBox="0 0 15 12" fill="none" stroke="#6b7488" stroke-width="1.1"><path d="M1 6c1.6-3 3.8-4.6 6.5-4.6S12.4 3 14 6c-1.6 3-3.8 4.6-6.5 4.6S2.6 9 1 6z"/><circle cx="7.5" cy="6" r="2.2"/></svg>
<div class="t" style="left:1759px;top:839.95px;height:20px;line-height:20px;font-size:13.8px;color:#5b6579">View</div>
<div class="abs" style="left:306px;top:931.3px;width:16px;height:16px;border:1px solid #e6e9f0;border-radius:4px;background:#fff"></div>
<div class="t" style="left:374px;top:929.3px;height:20px;line-height:20px;font-size:14.6px;color:#5f6a7e">193</div>
<div class="abs" style="left:478px;top:908.3px;width:73px;height:20px;border-radius:5px;background:#f6f7fb;font-size:11.6px;font-weight:700;color:#20242e;text-align:center;line-height:20px">02/12/2025</div>
<svg class="ic" style="left:509px;top:932.8px" width="10" height="13" viewBox="0 0 10 13" fill="none" stroke="#6b7488" stroke-width="1.1" stroke-linecap="round" stroke-linejoin="round"><path d="M5 .8v11M1.2 8l3.8 3.8L8.8 8"/></svg>
<div class="abs" style="left:478px;top:952.3px;width:73px;height:20px;border-radius:5px;background:#f6f7fb;font-size:11.6px;font-weight:700;color:#20242e;text-align:center;line-height:20px">05/12/2025</div>
<div class="t" style="left:618px;top:929.3px;height:20px;line-height:20px;font-size:14.9px;color:#5f6a7e">$353.91</div>
<div class="abs" style="left:778px;top:920.3px;width:38px;height:38px;border-radius:50%;background:#e9f1fc;color:#3e7ef5;font-size:14px;font-weight:700;text-align:center;line-height:38px">K</div>
<div class="abs" style="left:805.5px;top:946.8px;width:12px;height:12px;border-radius:50%;background:#f3c593;border:2px solid #fff"></div>
<div class="t" style="left:833px;top:919.3px;height:20px;line-height:20px;font-size:14.1px;font-weight:700;color:#22262e">Kelton Dickinson</div>
<div class="t" style="left:833px;top:939.3px;height:18px;line-height:18px;font-size:13.4px;color:#6b7488">@kaan61</div>
<div class="abs" style="left:1047px;top:920.3px;width:38px;height:38px;border-radius:50%;overflow:hidden"><svg width="38" height="38" viewBox="0 0 38 38"><rect width="38" height="38" fill="#c8ced9"/><path d="M12 0h16l-6 7h-4z" fill="#2c323e"/><path d="M19 7h3v18h-3z" fill="#a9afb8"/><path d="M0 16h38v22H0z" fill="#a8aeb7"/><path d="M0 17l8 3v18H0zM30 15h3v15h-3zM35 14h3v16h-3z" fill="#8d949e"/><path d="M8 29l12-3 12 3v2H8z" fill="#dfe2e7"/><path d="M8 33h22v5H8z" fill="#6d747f"/><path d="M18 33h6v3h-6z" fill="#e8c7a0"/><path d="M11 33h3v2h-3z" fill="#d57a5a"/></svg></div>
<div class="t" style="left:1101px;top:929.3px;height:20px;line-height:20px;font-size:14.3px;font-weight:700;color:#262a33">201 Beach Vista, Cape Town</div>
<div class="t" style="left:1583px;top:929.3px;height:20px;line-height:20px;font-size:14.8px;color:#5f6a7e">03/12/2025</div>
<div class="abs" style="left:1721px;top:920.3px;width:85px;height:38px;border:1px solid #e6e9f1;border-radius:5px;background:#fff"></div>
<svg class="ic" style="left:1737px;top:933.3px" width="15" height="12" viewBox="0 0 15 12" fill="none" stroke="#6b7488" stroke-width="1.1"><path d="M1 6c1.6-3 3.8-4.6 6.5-4.6S12.4 3 14 6c-1.6 3-3.8 4.6-6.5 4.6S2.6 9 1 6z"/><circle cx="7.5" cy="6" r="2.2"/></svg>
<div class="t" style="left:1759px;top:930.3px;height:20px;line-height:20px;font-size:13.8px;color:#5b6579">View</div>
</body></html>
